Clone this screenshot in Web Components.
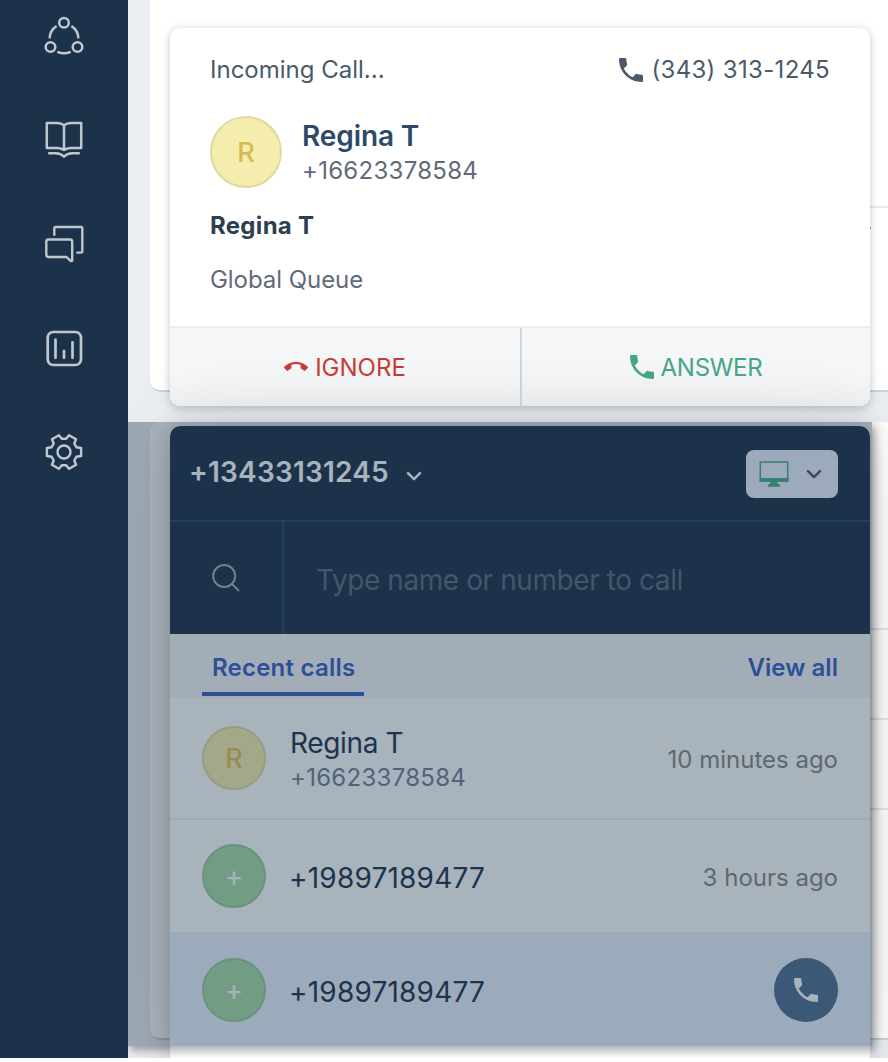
<!DOCTYPE html>
<html lang="en">
<head>
<meta charset="utf-8">
<title>Dialer</title>
<style>
  body {
    margin: 0;
    background: #fff;
    font-family: Inter, "Liberation Sans", sans-serif;
  }
</style>
</head>
<body>
<app-shell>
  <side-nav slot="nav"></side-nav>
  <page-cards slot="page"></page-cards>
  <incoming-call slot="popup" line="(343) 313-1245" name="Regina T" number="+16623378584" queue="Global Queue"></incoming-call>
  <dialer-panel slot="popup" line="+13433131245">
    <call-row initial="R" number="+16623378584" when="10 minutes ago">Regina T</call-row>
    <call-row initial="+" when="3 hours ago">+19897189477</call-row>
    <call-row initial="+" active>+19897189477</call-row>
  </dialer-panel>
</app-shell>

<script>
const icons = {
  phone: ['3 3 18 18', '<path fill="currentColor" d="M6.62 10.79c1.44 2.83 3.76 5.14 6.59 6.59l2.2-2.2c.27-.27.67-.36 1.02-.24 1.12.37 2.33.57 3.57.57.55 0 1 .45 1 1V20c0 .55-.45 1-1 1-9.39 0-17-7.61-17-17 0-.55.45-1 1-1h3.5c.55 0 1 .45 1 1 0 1.25.2 2.45.57 3.57.11.35.03.74-.25 1.02l-2.2 2.2z"/>'],
  hangup: ['0 0 24 24', '<path fill="currentColor" d="M12 9c-1.6 0-3.15.25-4.6.72v3.1c0 .39-.23.74-.56.9-.98.49-1.87 1.12-2.66 1.85-.18.18-.43.28-.7.28-.28 0-.53-.11-.71-.29L.29 13.08c-.18-.17-.29-.42-.29-.7 0-.28.11-.53.29-.71C3.34 8.78 7.46 7 12 7s8.66 1.78 11.71 4.67c.18.18.29.43.29.71 0 .28-.11.53-.29.71l-2.48 2.48c-.18.18-.43.29-.71.29-.27 0-.52-.11-.7-.28-.79-.74-1.69-1.36-2.67-1.85-.33-.16-.56-.5-.56-.9v-3.1C15.15 9.25 13.6 9 12 9z"/>'],
  chevron: ['0 0 16 16', '<path d="M2 5.2l6 6 6-6" fill="none" stroke="currentColor" stroke-width="2.5" stroke-linecap="round" stroke-linejoin="round"/>'],
  search: ['0 0 28 28', '<g fill="none" stroke="currentColor" stroke-width="2" stroke-linecap="round"><circle cx="12.2" cy="12" r="11"/><path d="m20 20 6.5 6.5"/></g>'],
  monitor: ['0 0 30 27', '<path d="M1.3.9h27.4v19.2H1.3z" fill="none" stroke="currentColor" stroke-width="1.5" stroke-linejoin="round"/><path fill="currentColor" d="M.6 17h28.8v3.2c0 .5-.4.8-.8.8H1.4c-.4 0-.8-.3-.8-.8zM12 21h6l.8 1.6 2 1.1c.7.4.7 2-.3 2h-11c-1 0-1-1.6-.3-2l2-1.1z"/>'],
  network: ['0 0 40 40', '<g fill="none" stroke="currentColor" stroke-width="2.5"><circle cx="20" cy="6.7" r="4.8"/><circle cx="6.5" cy="31" r="4.8"/><circle cx="33.5" cy="31" r="4.8"/><path d="M12.6 10C8.4 12.7 5.8 17 5.6 22.4M27.4 10c4.2 2.7 6.8 7 7 12.4M13.3 35.8q6.7 2.9 13.4 0"/></g>'],
  book: ['0 0 40 40', '<g fill="none" stroke="currentColor" stroke-width="2.5" stroke-linejoin="round" stroke-linecap="round"><path d="M2.8 3h10.5q4.4.2 6.7 2.3Q22.3 3.2 26.7 3h10.5v24.900H26.700q-4.400.2-6.700 2.100-2.300-1.900-6.700-2.100H2.800zM20 5.300V30M5.200 33.300h6.500q5.200.2 8.300 3.300 3.100-3.100 8.300-3.300h6.500"/></g>'],
  chat: ['0 0 40 40', '<g fill="none" stroke="currentColor" stroke-width="2.4" stroke-linejoin="round"><path d="M10.3 11.7V4.3Q10.3 3 11.6 3H37q1.3 0 1.3 1.3v23q0 1.3-1.3 1.3h-4.7"/><path d="M4.5 15.5H26q2.2 0 2.2 2.2v19l-1.4.5-4.2-4.2H4.5q-2.2 0-2.2-2.2V17.7q0-2.2 2.2-2.2z"/></g>'],
  chart: ['0 0 40 40', '<g fill="none" stroke="currentColor" stroke-width="2.7" stroke-linecap="round"><rect x="3.7" y="4" width="33.3" height="33" rx="5.5"/><path d="M11.5 11.7v18.1M20 23v6.8M28.5 14.3v15.5"/></g>'],
  gear: ['-20 -20 40 40', '<g fill="none" stroke="currentColor" stroke-width="2.4" stroke-linejoin="round"><circle r="6.5"/><path d="M17.1-4V4L12.500 4.700 10.300 8.500 12.100 12.800 5.100 16.800 2.200 13.200H-2.200L-5.100 16.800-12.100 12.800-10.300 8.500-12.500 4.700-17.100 4V-4L-12.500-4.700-10.300-8.500-12.100-12.800-5.100-16.800-2.200-13.200H2.200L5.100-16.800 12.100-12.800 10.300-8.500 12.500-4.700z"/></g>']
};

function icon(name, width, height = width) {
  const [viewBox, body] = icons[name];
  return `<svg width="${width}" height="${height}" viewBox="${viewBox}">${body}</svg>`;
}

class AppShell extends HTMLElement {
  constructor() {
    super();
    this.attachShadow({ mode: 'open' }).innerHTML = `
      <style>
        :host {
          display: grid;
          grid-template-columns: 128px 1fr;
          height: 1058px;
        }
        main {
          position: relative;
          overflow: hidden;
          background: #ebeff4;
        }
        /* dark veil that lies over the page, behind the popups */
        .veil {
          position: absolute;
          left: 0;
          top: 422px;
          width: 744px;
          height: 624px;
          background: rgba(28, 50, 74, .37);
          box-shadow: 2px 4px 8px rgba(0, 0, 0, .35);
          clip-path: inset(0 -20px -20px 0);
        }
        .popups {
          position: absolute;
          top: 28px;
          left: 42px;
          width: 700px;
          display: flex;
          flex-direction: column;
          gap: 20px;
        }
      </style>
      <slot name="nav"></slot>
      <main>
        <slot name="page"></slot>
        <div class="veil"></div>
        <div class="popups"><slot name="popup"></slot></div>
      </main>
    `;
  }
}
customElements.define('app-shell', AppShell);

class SideNav extends HTMLElement {
  constructor() {
    super();
    const items = ['network', 'book', 'chat', 'chart', 'gear'];
    this.attachShadow({ mode: 'open' }).innerHTML = `
      <style>
        :host {
          display: block;
          background: #1c324a;
          color: #c0c7cf;
        }
        nav {
          display: flex;
          flex-direction: column;
          align-items: center;
          gap: 64px;
          padding-top: 16px;
        }
        svg { display: block; }
      </style>
      <nav>${items.map((name) => icon(name, 40)).join('')}</nav>
    `;
  }
}
customElements.define('side-nav', SideNav);

class PageCards extends HTMLElement {
  constructor() {
    super();
    this.attachShadow({ mode: 'open' }).innerHTML = `
      <style>
        :host {
          display: flex;
          flex-direction: column;
          gap: 30px;
          padding-left: 22px;
        }
        section {
          box-sizing: border-box;
          width: 800px;
          background: #fff;
          border-bottom: 2px solid #cbd3dd;
          border-radius: 10px;
        }
        .top { height: 392px; border-top-left-radius: 0; }
        .list { height: 618px; }
        div { box-sizing: border-box; margin-left: 22px; height: 90px; border-bottom: 2px solid #e3e7ec; }
        .top div { height: 208px; border-color: #ebebed; }
        .list div:first-child { height: 208px; }
        .top span { display: block; width: 1px; height: 2px; margin: 19px 0 0 720px; background: #999; }
      </style>
      <section class="top"><div></div><span></span></section>
      <section class="list"><div></div><div></div><div></div></section>
    `;
  }
}
customElements.define('page-cards', PageCards);

class IncomingCall extends HTMLElement {
  connectedCallback() {
    const attr = (name) => this.getAttribute(name);
    this.attachShadow({ mode: 'open' }).innerHTML = `
      <style>
        :host {
          display: flex;
          flex-direction: column;
          box-sizing: border-box;
          height: 378px;
          border-radius: 10px;
          overflow: hidden;
          background: #fff;
          color: #4a5a69;
          font-size: 24px;
          line-height: 32px;
          box-shadow: 0 2px 10px rgba(0, 0, 0, .22);
        }
        .body { flex: 1; padding: 26px 40px 0; }
        header, .line, .caller, footer, button { display: flex; align-items: center; }
        header { justify-content: space-between; }
        .line { gap: 8px; letter-spacing: .33px; }
        .caller { gap: 20px; height: 72px; margin-top: 30px; }
        .caller > :last-child { padding-top: 3px; }
        .avatar {
          box-sizing: border-box;
          width: 72px;
          height: 72px;
          border: 2px solid #e0da9f;
          border-radius: 50%;
          background: #f4edad;
          color: #d6bb52;
          font-size: 27px;
          font-weight: 500;
          line-height: 70px;
          text-align: center;
        }
        .name { font-size: 28px; line-height: 35px; font-weight: 600; letter-spacing: -.1px; color: #2c4a68; }
        .number { line-height: 34px; letter-spacing: .28px; }
        .muted { color: #5f6b7a; }
        .contact { margin-top: 22px; font-weight: 700; letter-spacing: .3px; color: #2c3e50; }
        .queue { margin-top: 22px; letter-spacing: -.05px; }
        footer { height: 78px; border-top: 2px solid #ebedef; background: linear-gradient(#f5f7f9 60%, #f0f1f3); align-items: stretch; }
        button {
          box-sizing: border-box;
          flex: 1;
          justify-content: center;
          gap: 7px;
          border: 0;
          padding: 0;
          background: none;
          font: inherit;
        }
        button span { padding-top: 2px; }
        .ignore { flex: 0 0 352px; color: #c93c37; border-right: 2px solid #ced6df; }
        .answer { letter-spacing: -.3px; color: #48a688; }
      </style>
      <div class="body">
        <header>
          <span>Incoming Call...</span>
          <span class="line">${icon('phone', 24)}<span>${attr('line')}</span></span>
        </header>
        <div class="caller">
          <div class="avatar">${attr('name')[0]}</div>
          <div>
            <div class="name">${attr('name')}</div>
            <div class="number muted">${attr('number')}</div>
          </div>
        </div>
        <div class="contact">${attr('name')}</div>
        <div class="queue muted">${attr('queue')}</div>
      </div>
      <footer>
        <button class="ignore">${icon('hangup', 24)}<span>IGNORE</span></button>
        <button class="answer">${icon('phone', 24)}<span>ANSWER</span></button>
      </footer>
    `;
  }
}
customElements.define('incoming-call', IncomingCall);

class DialerPanel extends HTMLElement {
  connectedCallback() {
    this.attachShadow({ mode: 'open' }).innerHTML = `
      <style>
        :host {
          display: block;
          height: 632px;
          border-radius: 10px 10px 0 0;
          overflow: hidden;
          background: linear-gradient(#b5b7b9, #fff) 0 620px / 100% 12px no-repeat #fff;
          color: #a9b3bd;
          box-shadow: 0 0 24px rgba(0, 0, 0, .2), 0 0 90px rgba(0, 0, 0, .1);
        }
        header, .line, .device, .search, .tabs { display: flex; align-items: center; }
        header {
          box-sizing: border-box;
          justify-content: space-between;
          height: 96px;
          padding: 2px 32px 0 19px;
          background: #1c324a;
          border-bottom: 2px solid #253f5a;
        }
        .line { gap: 17px; font-size: 28px; font-weight: 600; letter-spacing: .2px; margin-top: -4px; }
        .line svg { margin-top: 7px; }
        .device {
          box-sizing: border-box;
          width: 92px;
          height: 48px;
          padding: 0 16px 0 13px;
          justify-content: space-between;
          border-radius: 8px;
          background: #9caabb;
          color: #3a4b5f;
        }
        .device svg:first-child { color: #388074; }
        .search { height: 112px; background: #1c324a; align-items: stretch; }
        .lens {
          box-sizing: border-box;
          width: 114px;
          display: grid;
          place-items: center;
          border-right: 2px solid #253f5a;
          color: #72808f;
        }
        .hint { padding-left: 32px; font-size: 28px; line-height: 117px; letter-spacing: -.42px; color: #43566b; }
        .tabs {
          height: 64px;
          padding: 0 32px;
          justify-content: space-between;
          background: #a3adb7;
          color: #2b5097;
          font-size: 24px;
          font-weight: 600;
        }
        .tab {
          box-sizing: border-box;
          width: 162px;
          height: 60px;
          padding-left: 10px;
          border-bottom: 4px solid #2b5097;
          line-height: 64px;
          letter-spacing: .22px;
        }
        .all { padding-top: 3px; letter-spacing: .05px; }
      </style>
      <header>
        <div class="line"><span>${this.getAttribute('line')}</span>${icon('chevron', 16)}</div>
        <div class="device">${icon('monitor', 30, 27)}${icon('chevron', 16)}</div>
      </header>
      <div class="search">
        <div class="lens">${icon('search', 28)}</div>
        <div class="hint">Type name or number to call</div>
      </div>
      <div class="tabs">
        <span class="tab">Recent calls</span>
        <span class="all">View all</span>
      </div>
      <slot></slot>
    `;
  }
}
customElements.define('dialer-panel', DialerPanel);

class CallRow extends HTMLElement {
  connectedCallback() {
    const initial = this.getAttribute('initial');
    const number = this.getAttribute('number');
    const end = this.hasAttribute('active')
      ? `<span class="call">${icon('phone', 24)}</span>`
      : `<span class="when">${this.getAttribute('when')}</span>`;
    this.attachShadow({ mode: 'open' }).innerHTML = `
      <style>
        :host {
          display: flex;
          align-items: center;
          box-sizing: border-box;
          height: 112px;
          padding: 0 32px;
          background: #a9b3bc;
          color: #1c344e;
          font-size: 28px;
        }
        :host([number]) { height: 122px; border-bottom: 2px solid #9ba8b8; }
        :host([active]) { height: 114px; padding-top: 2px; background: #9babbc; }
        .avatar {
          box-sizing: border-box;
          width: 64px;
          height: 64px;
          margin-right: 23px;
          border: 2px solid #69937f;
          border-radius: 50%;
          background: #739c84;
          color: #a9b3bd;
          line-height: 60px;
          text-align: center;
        }
        .avatar.initial { margin-right: 24px; border-color: #959c85; background: #a3a988; color: #978c52; font-size: 27px; font-weight: 500; line-height: 61px; }
        .who { flex: 1; line-height: 36px; padding-top: 4px; letter-spacing: .2px; }
        :host([number]) .who { letter-spacing: -.35px; }
        .who .number { font-size: 24px; line-height: 34px; letter-spacing: .28px; color: #50637a; }
        .when { font-size: 24px; padding-top: 2px; color: #5d6870; }
        .call {
          width: 64px;
          height: 64px;
          display: grid;
          place-items: center;
          border-radius: 50%;
          background: #3b5876;
          color: #a9b3bd;
        }
      </style>
      <span class="avatar ${initial === '+' ? '' : 'initial'}">${initial}</span>
      <div class="who">
        <slot></slot>
        ${number ? `<div class="number">${number}</div>` : ''}
      </div>
      ${end}
    `;
  }
}
customElements.define('call-row', CallRow);
</script>
</body>
</html>
